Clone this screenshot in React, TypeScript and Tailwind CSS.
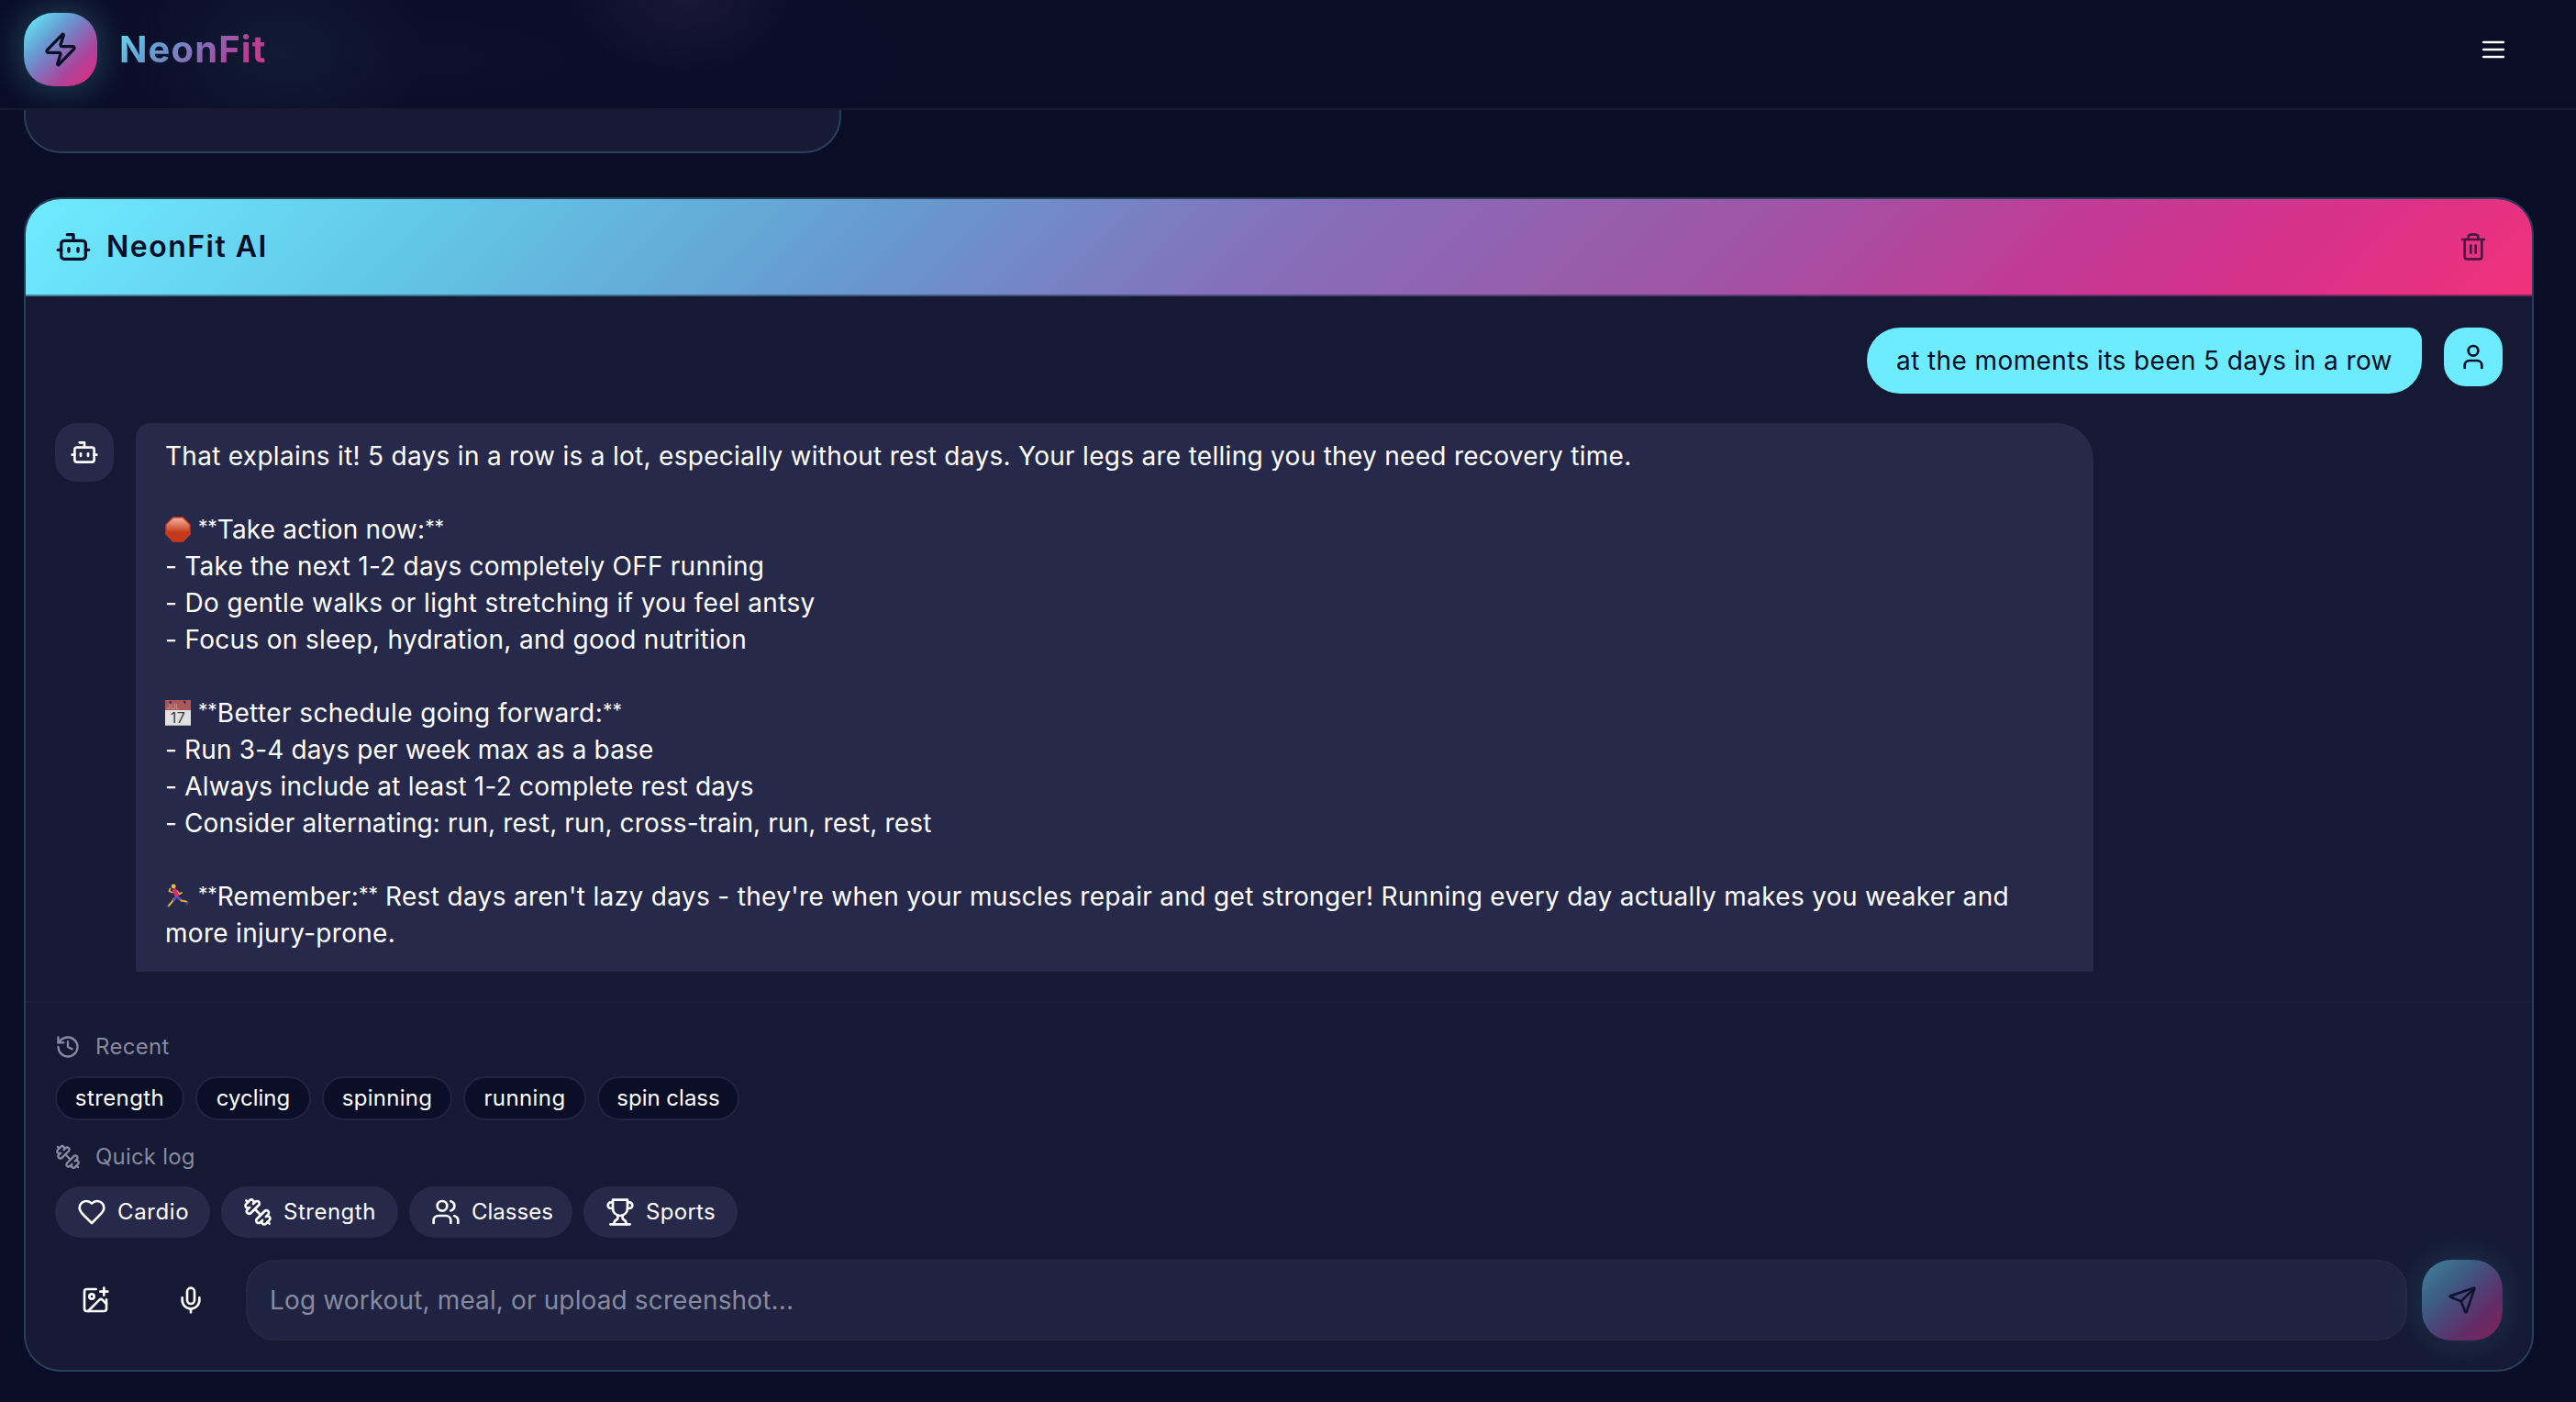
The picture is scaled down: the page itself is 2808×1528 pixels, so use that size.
import type { ReactNode } from "react"
import { Bot, History, ImagePlus, Mic, Send, Trash2, User, Zap } from "lucide-react"

interface IconProps {
  className?: string
  children: ReactNode
}

function Icon({ className = "size-8", children }: IconProps) {
  return (
    <svg
      className={className}
      viewBox="0 0 24 24"
      fill="none"
      stroke="currentColor"
      strokeWidth="2"
      strokeLinecap="round"
      strokeLinejoin="round"
    >
      {children}
    </svg>
  )
}

function MenuIcon() {
  return (
    <Icon>
      <path d="M4 6h16M4 12h16M4 18h16" />
    </Icon>
  )
}

function DumbbellIcon({ className }: { className?: string }) {
  return (
    <Icon className={className}>
      <path d="M14.4 14.4 9.6 9.6" />
      <path d="M18.657 21.485a2 2 0 1 1-2.829-2.828l-1.767 1.768a2 2 0 1 1-2.829-2.829l6.364-6.364a2 2 0 1 1 2.829 2.829l-1.768 1.767a2 2 0 1 1 2.828 2.829z" />
      <path d="m21.5 21.5-1.4-1.4" />
      <path d="M3.9 3.9 2.5 2.5" />
      <path d="M6.404 12.768a2 2 0 1 1-2.829-2.829l1.768-1.767a2 2 0 1 1-2.828-2.829l2.828-2.828a2 2 0 1 1 2.829 2.828l1.767-1.768a2 2 0 1 1 2.829 2.829z" />
    </Icon>
  )
}

function HeartIcon() {
  return (
    <Icon>
      <path d="M19 14c1.49-1.46 3-3.21 3-5.5A5.5 5.5 0 0 0 16.5 3c-1.76 0-3 .5-4.5 2-1.5-1.5-2.74-2-4.5-2A5.5 5.5 0 0 0 2 8.5c0 2.3 1.5 4.05 3 5.5l7 7Z" />
    </Icon>
  )
}

function UsersIcon() {
  return (
    <Icon>
      <path d="M16 21v-2a4 4 0 0 0-4-4H6a4 4 0 0 0-4 4v2" />
      <circle cx="9" cy="7" r="4" />
      <path d="M22 21v-2a4 4 0 0 0-3-3.87" />
      <path d="M16 3.13a4 4 0 0 1 0 7.75" />
    </Icon>
  )
}

function TrophyIcon() {
  return (
    <Icon>
      <path d="M6 9H4.5a2.5 2.5 0 0 1 0-5H6" />
      <path d="M18 9h1.5a2.5 2.5 0 0 0 0-5H18" />
      <path d="M4 22h16" />
      <path d="M10 14.66V17c0 .55-.47.98-.97 1.21C7.85 18.75 7 20.24 7 22" />
      <path d="M14 14.66V17c0 .55.47.98.97 1.21C16.15 18.75 17 20.24 17 22" />
      <path d="M18 2H6v7a6 6 0 0 0 12 0V2Z" />
    </Icon>
  )
}

const recent = [
  { label: "strength", className: "w-[141px] tracking-[0.4px]" },
  { label: "cycling", className: "w-[126px]" },
  { label: "spinning", className: "w-[142px] tracking-[0.3px]" },
  { label: "running", className: "w-[134px] tracking-[0.4px]" },
  { label: "spin class", className: "w-[155px]" },
]

const quickLog = [
  { label: "Cardio", icon: <HeartIcon />, className: "w-[169px] tracking-[0.6px]" },
  { label: "Strength", icon: <DumbbellIcon />, className: "w-[193px] tracking-[0.5px]" },
  { label: "Classes", icon: <UsersIcon />, className: "w-[178px]" },
  { label: "Sports", icon: <TrophyIcon />, className: "w-[168px] tracking-[0.3px]" },
]

function StopEmoji() {
  return (
    <svg className="size-full" viewBox="0 0 28 28">
      <defs>
        <linearGradient id="stop" x1="0" y1="0" x2="0" y2="1">
          <stop offset="0" stopColor="#f3b5a4" />
          <stop offset="0.5" stopColor="#cf5535" />
          <stop offset="0.62" stopColor="#c23a1c" />
          <stop offset="1" stopColor="#c4381b" />
        </linearGradient>
      </defs>
      <path d="M8.8 1h10.4L27 8.8v10.4L19.2 27H8.8L1 19.2V8.8z" fill="url(#stop)" stroke="#cf3a20" strokeWidth="1.4" />
    </svg>
  )
}

function CalendarEmoji() {
  return (
    <svg className="size-full" viewBox="0 0 28 28">
      <path d="M0 0h28v28H0z" fill="#e2e1df" />
      <path d="M0 0h28v11H0z" fill="#a9595b" />
      <path d="M0 27h28v1H0z" fill="#a9b4b6" />
      <path d="M5 1.5l1.5 2M20.5 1l1.5 2.5" stroke="#2d2c4a" strokeWidth="2.2" />
      <text x="1.5" y="10" fontSize="7" fontFamily="Inter, sans-serif" fill="#d8a0a0">
        JUL
      </text>
      <text x="14" y="24.5" textAnchor="middle" fontSize="16" fontFamily="Inter, sans-serif" fill="#3b3b3b">
        17
      </text>
    </svg>
  )
}

function RunnerEmoji() {
  return (
    <svg className="size-full" viewBox="0 0 28 28" fill="none" strokeLinecap="round" strokeLinejoin="round">
      <path d="M8 9.5 4.5 8.5 5.5 5.5M13 8l2.5 3.5L18 10" stroke="#f0b03c" strokeWidth="1.8" />
      <path d="M9.5 16.5 7.5 20 4 24M15 16l2.5 2.5 5.5 1" stroke="#e9a83a" strokeWidth="2" />
      <path d="M12 14.5 9.5 18M13 14.5l3 2.5" stroke="#4a55c8" strokeWidth="2.6" />
      <path d="M10.5 7.5 12.5 12.5" stroke="#dc2f72" strokeWidth="4.6" />
      <circle cx="9.2" cy="3" r="2.4" fill="#f3b83f" />
      <path d="M4 25.5 2 24.5M23.5 23l1.5-3" stroke="#59606e" strokeWidth="1.3" />
    </svg>
  )
}

function Emoji({ children }: { children: ReactNode }) {
  return <span className="mr-2 inline-block size-7 align-[-4px]">{children}</span>
}

function Stars() {
  return <span className="align-[5px] text-[21px] leading-none tracking-[-0.2px]">**</span>
}

function Header() {
  return (
    <header className="relative z-10 flex h-[120px] shrink-0 items-start justify-between overflow-hidden border-b-2 border-[#181a32] bg-[#090d26] pt-3.5 pr-[74px] pl-[26px]">
      <div className="absolute -top-20 -left-20 h-72 w-[1100px] bg-[radial-gradient(closest-side,#0e0f2a,transparent)]" />
      <div className="absolute -top-14 left-36 h-56 w-80 bg-[radial-gradient(closest-side,#111b33,transparent)]" />
      <div className="absolute -top-24 left-[620px] h-44 w-64 bg-[radial-gradient(closest-side,#1b1936,transparent)]" />
      <div className="relative flex items-center gap-6">
        <div className="flex size-20 items-center justify-center rounded-[32px] bg-[linear-gradient(135deg,#67e2f5_8%,#649fd2_33%,#856fba_52%,#b04199_72%,#de2f80_95%)] text-[#0a0e27] shadow-[0_0_40px_rgba(103,232,249,0.3)]">
          <Zap className="size-10" />
        </div>
        <span className="bg-[linear-gradient(135deg,#67def2_0%,#649fd2_30%,#856fba_52%,#b04199_75%,#e22e7e_100%)] bg-clip-text text-[40px] leading-[56px] font-bold tracking-[1.1px] text-transparent">
          NeonFit
        </span>
      </div>
      <button className="flex h-20 items-center text-white">
        <MenuIcon />
      </button>
    </header>
  )
}

function Messages() {
  return (
    <div className="mt-[34px] mb-8 flex h-[702px] flex-col gap-8 overflow-hidden px-8">
      <div className="flex shrink-0 items-start justify-end gap-6">
        <div className="w-[605px] rounded-[40px] rounded-tr-2xl bg-[#6eecff] py-4 text-center text-[28px] leading-10 tracking-[0.4px] whitespace-nowrap text-[#0a0e27]">
          at the moments its been 5 days in a row
        </div>
        <div className="flex size-16 items-center justify-center rounded-3xl bg-[#6eecff] text-[#0a0e27]">
          <User className="size-8" />
        </div>
      </div>
      <div className="flex shrink-0 items-start gap-6">
        <div className="flex size-16 items-center justify-center rounded-3xl bg-[#26294a] text-white">
          <Bot className="size-8" />
        </div>
        <div className="w-[2134px] rounded-[40px] rounded-tl-2xl bg-[#26294a] px-8 pt-4 pb-14 text-[28px] leading-10 whitespace-pre text-white">
          <p className="tracking-[0.29px]">That explains it! 5 days in a row is a lot, especially without rest days. Your legs are telling you they need recovery time.</p>
          <p className="mt-10 tracking-[0.2px]"><Emoji><StopEmoji /></Emoji><Stars />Take action now:<Stars /></p>
          <p className="tracking-[0.24px]">- Take the next 1-2 days completely OFF running</p>
          <p className="tracking-[0.36px]">- Do gentle walks or light stretching if you feel antsy</p>
          <p className="tracking-[0.32px]">- Focus on sleep, hydration, and good nutrition</p>
          <p className="mt-10 tracking-[0.4px]"><Emoji><CalendarEmoji /></Emoji><Stars />Better schedule going forward:<Stars /></p>
          <p className="tracking-[0.16px]">- Run 3-4 days per week max as a base</p>
          <p className="tracking-[0.22px]">- Always include at least 1-2 complete rest days</p>
          <p className="tracking-[0.13px]">- Consider alternating: run, rest, run, cross-train, run, rest, rest</p>
          <p className="mt-10 tracking-[0.34px]"><Emoji><RunnerEmoji /></Emoji><Stars />Remember:<Stars /> Rest days aren't lazy days - they're when your muscles repair and get stronger! Running every day actually makes you weaker and</p>
          <p className="tracking-[0.3px]">more injury-prone.</p>
        </div>
      </div>
    </div>
  )
}

function Composer() {
  return (
    <div className="border-t-2 border-[#1c1f3a] p-8 text-2xl leading-8 text-white">
      <div className="flex items-center gap-4 tracking-[0.3px] text-[#878a9f]">
        <History className="size-7" />
        <span>Recent</span>
      </div>
      <div className="mt-4 flex gap-3">
        {recent.map(({ label, className }) => (
          <button
            key={label}
            className={`flex h-12 items-center justify-center rounded-full border-2 border-[#22243e] bg-[#0a0e27] whitespace-nowrap ${className}`}
          >
            {label}
          </button>
        ))}
      </div>
      <div className="mt-6 flex items-center gap-4 tracking-[0.2px] text-[#878a9f]">
        <DumbbellIcon className="size-7" />
        <span>Quick log</span>
      </div>
      <div className="mt-4 flex gap-3">
        {quickLog.map(({ label, icon, className }) => (
          <button key={label} className={`flex h-14 items-center gap-3 rounded-full bg-[#26294a] pl-6 ${className}`}>
            {icon}
            {label}
          </button>
        ))}
      </div>
      <div className="mt-6 flex gap-4">
        <button className="flex size-[88px] items-center justify-center">
          <ImagePlus className="size-8" />
        </button>
        <button className="flex size-[88px] items-center justify-center">
          <Mic className="size-8" />
        </button>
        <input
          className="h-[88px] flex-1 rounded-[32px] border-2 border-[#24273f] bg-[#1f2241] px-6 text-[28px] tracking-[0.13px] placeholder:text-[#878a9f]"
          placeholder="Log workout, meal, or upload screenshot..."
        />
        <button className="flex size-[88px] items-center justify-center rounded-[32px] bg-[linear-gradient(135deg,#6eecff_0%,#649fd2_33%,#856fba_52%,#b04199_72%,#ea2f7c_100%)] text-[#0a0e27] opacity-50 shadow-[0_0_40px_rgba(103,232,249,0.3)]">
          <Send className="size-8" />
        </button>
      </div>
    </div>
  )
}

export default function App() {
  return (
    <div className="flex h-[1528px] w-[2808px] flex-col overflow-hidden bg-[#090d26] font-[Inter,sans-serif]">
      <Header />
      <div className="ml-[26px] h-[47px] w-[891px] shrink-0 rounded-b-[40px] border-2 border-t-0 border-[#273f5b] bg-[#161a35]" />
      <section className="mt-12 ml-[26px] h-[1280px] w-[2736px] shrink-0 overflow-hidden rounded-[40px] border-2 border-[#273f5b] bg-[#151934]">
        <div className="flex h-[106px] items-center justify-between border-b-2 border-[#161a35]/50 bg-[linear-gradient(135deg,#6eecff_0%,#62c6e6_17%,#669ace_34%,#856fba_50%,#a054a6_68%,#c23a95_80%,#d9318a_90%,#f0327a_100%)] pr-12 pl-8 text-[#0a0e27]">
          <div className="flex items-center gap-4">
            <Bot className="size-10" />
            <span className="text-[32px] leading-none font-semibold tracking-[1.5px]">NeonFit AI</span>
          </div>
          <Trash2 className="size-8 opacity-70" />
        </div>
        <Messages />
        <Composer />
      </section>
    </div>
  )
}
